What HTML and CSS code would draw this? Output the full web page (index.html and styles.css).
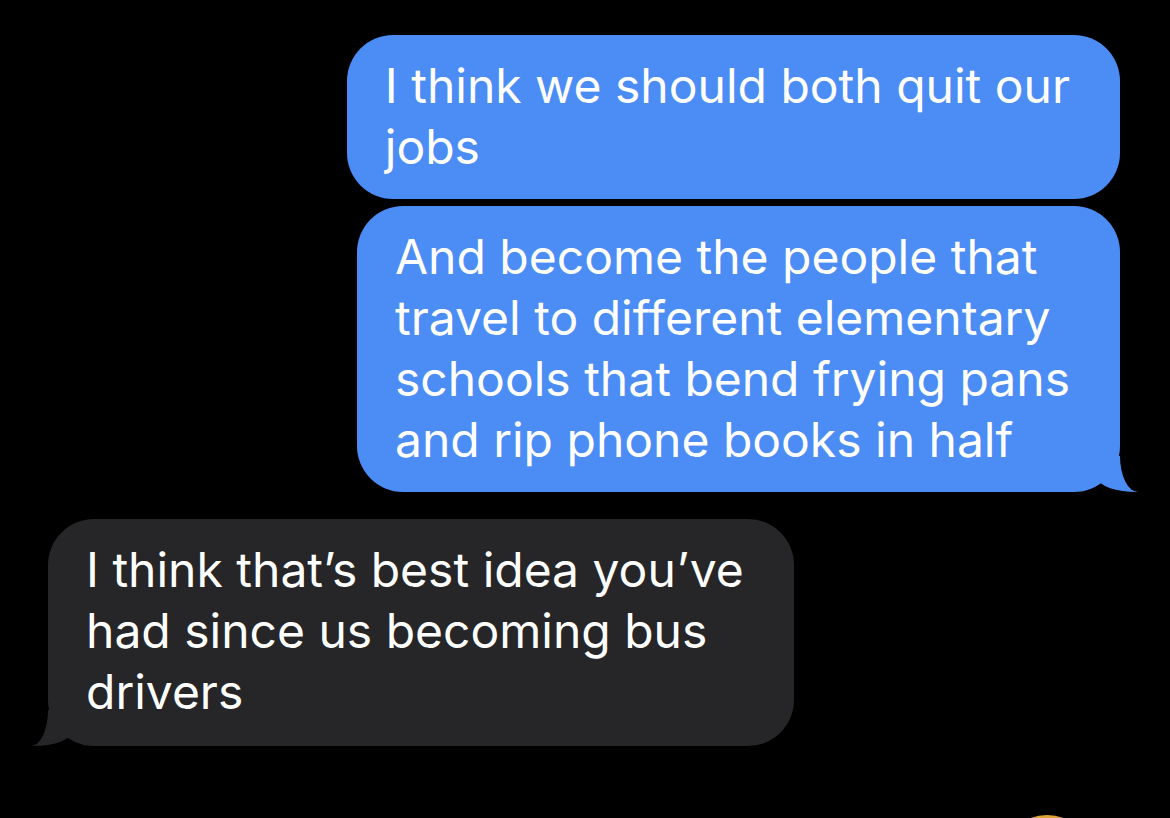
FILE: index.html
```html
<!DOCTYPE html>
<html lang="en">
<head>
    <meta charset="UTF-8">
    <meta name="viewport" content="width=device-width, initial-scale=1.0">
    <title>Messages</title>
    <link rel="stylesheet" href="styles.css">
</head>
<body>
    <div class="thread">
        <div class="stamp">Today 9:41 PM</div>

        <div class="bubble sent">I think we should both quit our<br>jobs</div>
        <div class="bubble sent tail">And become the people that<br>travel to different elementary<br>schools that bend frying pans<br>and rip phone books in half</div>

        <div class="bubble received tail">I think that’s best idea you’ve<br>had since us becoming bus<br>drivers</div>

        <div class="avatar"></div>
    </div>
</body>
</html>
```

FILE: styles.css
```css
html, body {
    margin: 0;
    height: 100%;
    overflow: hidden;
    background-color: #000;
}
body {
    font-family: Inter, "Noto Sans", sans-serif;
    -webkit-font-smoothing: antialiased;
}
.thread {
    display: flex;
    flex-direction: column;
    padding: 0 50px 0 48px;
}
.stamp {
    align-self: center;
    margin-top: -30px;
    height: 36px;
    font-size: 28px;
    line-height: 28px;
    color: #8e8e93;
}
.bubble {
    position: relative;
    width: fit-content;
    padding: 20px 50px 22px 38px;
    border-radius: 46px;
    font-size: 48px;
    font-weight: 400;
    line-height: 61px;
    color: #fff;
}
.stamp + .bubble {
    margin-top: 29px;
}
.sent {
    align-self: flex-end;
    background-color: #4b8df5;
}
.sent + .sent {
    margin-top: 7px;
}
.received {
    align-self: flex-start;
    margin-top: 27px;
    padding-bottom: 24px;
    background-color: #262628;
}

/* bubble tails: a coloured wedge, then a black scoop cut from its outer side */
.tail::before,
.tail::after {
    content: "";
    position: absolute;
    bottom: 0;
}
.sent.tail::before {
    right: -19px;
    width: 40px;
    height: 36px;
    background-color: #4b8df5;
    border-bottom-left-radius: 38px 13px;
}
.sent.tail::after {
    right: -28px;
    width: 28px;
    height: 40px;
    background-color: #000;
    border-bottom-left-radius: 18px 36px;
}
.received.tail::before {
    left: -16px;
    width: 38px;
    height: 36px;
    background-color: #262628;
    border-bottom-right-radius: 36px 13px;
}
.received.tail::after {
    left: -28px;
    width: 28px;
    height: 40px;
    background-color: #000;
    border-bottom-right-radius: 17px 36px;
}

.avatar {
    align-self: flex-end;
    flex-shrink: 0;
    margin: 69px 26px 0 0;
    width: 94px;
    height: 94px;
    border-radius: 50%;
    background: radial-gradient(circle at 50% 20%, #f2b640, #a8741a 70%);
}
```
